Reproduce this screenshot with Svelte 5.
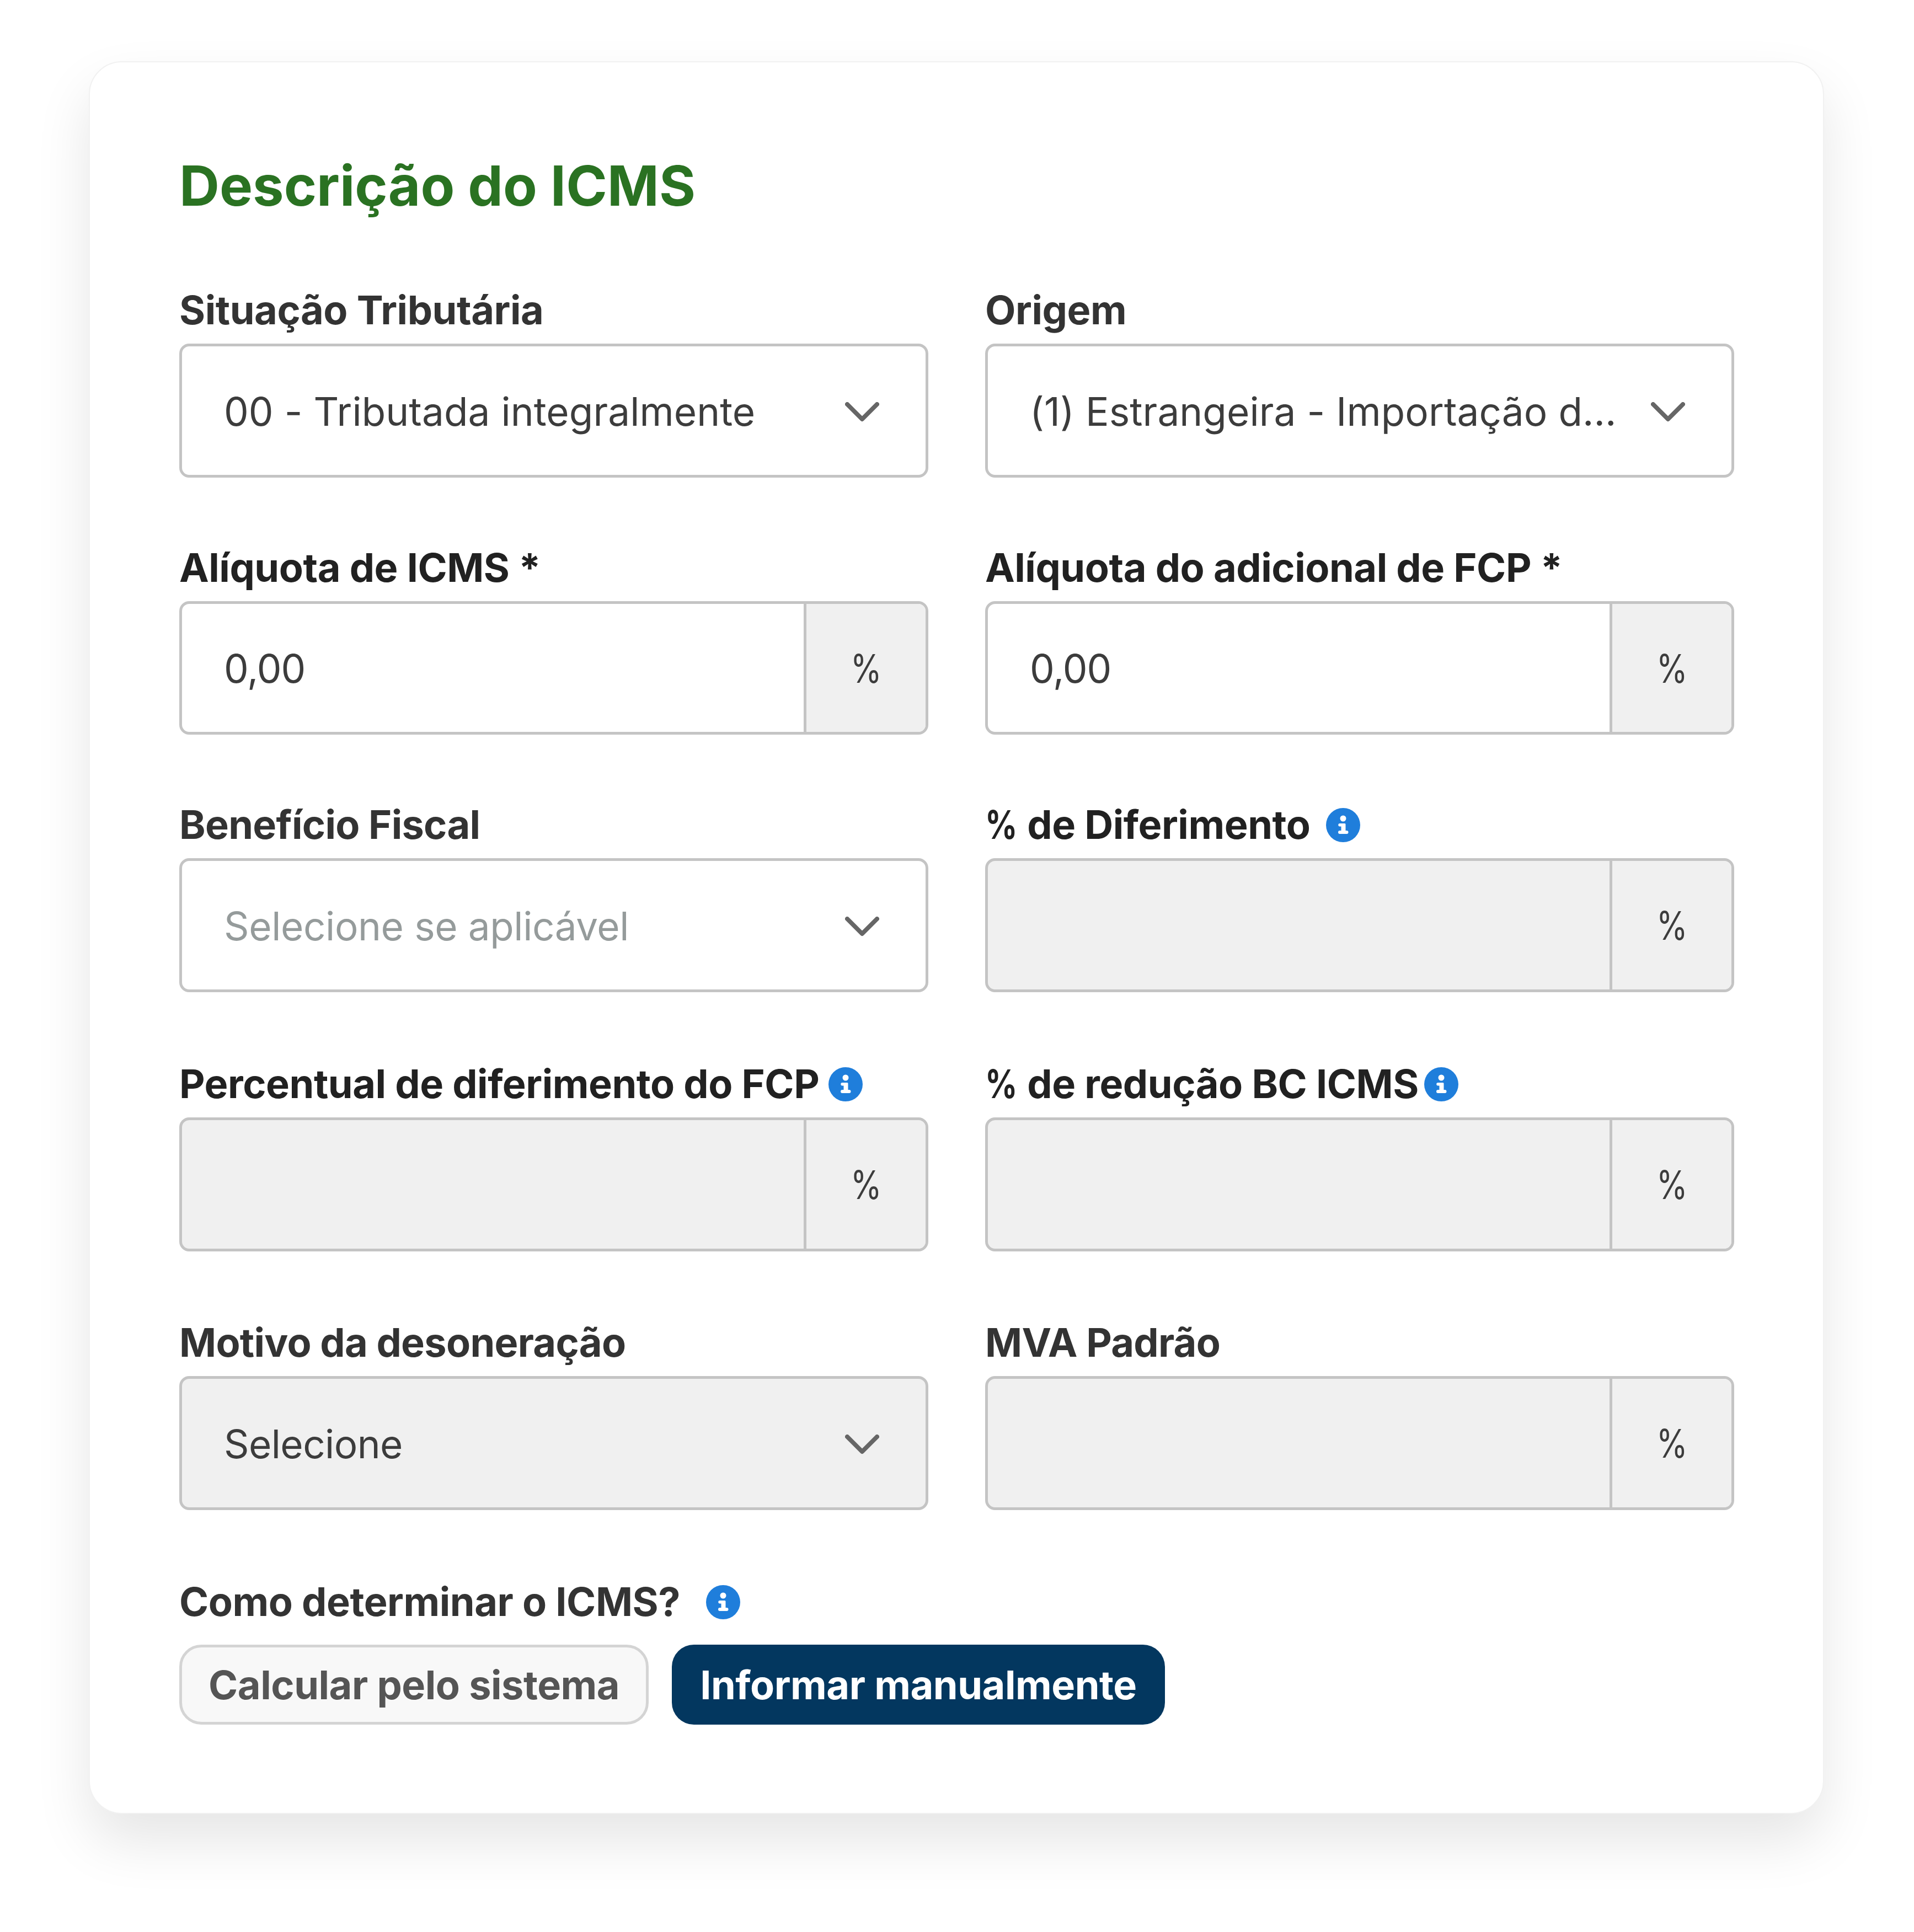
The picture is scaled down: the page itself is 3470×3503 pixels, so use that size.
<script>
  const fields = [
    { label: 'Situação Tributária', kind: 'select', value: '00 - Tributada integralmente' },
    { label: 'Origem', kind: 'select', value: '(1) Estrangeira - Importação d...' },
    { label: 'Alíquota de ICMS *', kind: 'pct', value: '0,00', strong: true },
    { label: 'Alíquota do adicional de FCP *', kind: 'pct', value: '0,00', strong: true },
    { label: 'Benefício Fiscal', kind: 'select', value: 'Selecione se aplicável', placeholder: true, snug: true },
    { label: ' de Diferimento', pre: '%', kind: 'pct', disabled: true, strong: true, info: 'wide' },
    { label: 'Percentual de diferimento do FCP', kind: 'pct', disabled: true, strong: true, info: 'loose' },
    { label: ' de redução BC ICMS', pre: '%', kind: 'pct', disabled: true, strong: true, info: 'tight' },
    { label: 'Motivo da desoneração', kind: 'select', value: 'Selecione', disabled: true, snug: true },
    { label: 'MVA Padrão', kind: 'pct', disabled: true, snug: true }
  ];
</script>

{#snippet info(cls)}
  <svg class="info {cls}" viewBox="0 0 62 62" aria-hidden="true">
    <circle cx="31" cy="31" r="31" fill="#1f7edb" />
    <circle cx="31" cy="19" r="5.5" fill="#fff" />
    <path d="M25 28h9a1.500 1.500 0 0 1 1.500 1.500V41h2a2.500 2.500 0 0 1 0 6H25a2.500 2.500 0 0 1 0-6h2.500V33.500H25a2.700 2.700 0 0 1 0-5.500z" fill="#fff" />
  </svg>
{/snippet}

<main class="card">
  <h1>Descrição do ICMS</h1>
  <div class="grid">
    {#each fields as f}
      <div class="field">
        <div class="label" class:strong={f.strong} class:snug={f.snug}>
          <span class="text">{#if f.pre}<span class="pc">{f.pre}</span>{/if}{f.label}</span>
          {#if f.info}{@render info(f.info)}{/if}
        </div>
        {#if f.kind === 'select'}
          <div class="control select" class:disabled={f.disabled}>
            <span class="value" class:placeholder={f.placeholder}>{f.value}</span>
            <svg class="chev" viewBox="0 0 62 36" aria-hidden="true">
              <path d="M4 4l27 27L58 4" fill="none" stroke="#666" stroke-width="8" stroke-linecap="round" stroke-linejoin="round" />
            </svg>
          </div>
        {:else}
          <div class="control pct" class:disabled={f.disabled}>
            <span class="value">{f.value ?? ''}</span>
            <span class="unit"><span class="pc">%</span></span>
          </div>
        {/if}
      </div>
    {/each}
  </div>
  <div class="how">
    <div class="label"><span class="text">Como determinar o ICMS?</span>{@render info('widest')}</div>
    <div class="buttons">
      <button class="btn ghost">Calcular pelo sistema</button>
      <button class="btn solid">Informar manualmente</button>
    </div>
  </div>
</main>

<style>
  :global(body) { margin: 0; background: #fff; }
  .card {
    box-sizing: border-box;
    width: 3146px;
    height: 3178px;
    margin: 111px 0 214px 161px;
    padding: 163px 160px 0 162px;
    background: #fff;
    border: 2px solid #f1f1f1;
    border-radius: 60px;
    box-shadow: 0 50px 100px rgba(0, 0, 0, 0.1);
    font-family: Inter, "Liberation Sans", sans-serif;
  }
  h1 {
    margin: 0 0 127px;
    font-size: 101px;
    line-height: 120px;
    font-weight: 700;
    color: #2a7222;
  }
  .grid {
    display: grid;
    grid-template-columns: 1358px 1358px;
    grid-template-rows: 343px 342px 343px 346px 345px;
    column-gap: 103px;
    row-gap: 124px;
  }
  .field { display: flex; flex-direction: column; justify-content: flex-end; }
  .label {
    display: flex;
    align-items: center;
    height: 76px;
    margin-bottom: 24px;
    font-size: 72px;
    font-weight: 700;
    letter-spacing: -0.45px;
    color: #333;
    white-space: nowrap;
  }
  .label.strong { color: #212121; }
  .label.snug { letter-spacing: -0.7px; }
  .label .pc {
    display: inline-block;
    transform: scaleX(0.8);
    transform-origin: left center;
    margin-right: -13px;
  }
  .info { width: 62px; height: 62px; flex: none; position: relative; top: 2px; }
  .info.wide { margin-left: 29px; }
  .info.widest { margin-left: 47px; }
  .info.loose { margin-left: 17px; }
  .info.tight { margin-left: 10px; }
  .control {
    box-sizing: border-box;
    display: flex;
    align-items: center;
    height: 243px;
    border: 5px solid #c4c4c4;
    border-radius: 18px;
    background: #fff;
    font-size: 71px;
    color: #3c3c3c;
    overflow: hidden;
  }
  .control.disabled { background: #f0f0f0; }
  .value { flex: 1; padding: 2px 0 0 76px; white-space: nowrap; letter-spacing: 0.08px; }
  .pct .value { letter-spacing: -1px; }
  .disabled .value { letter-spacing: -0.6px; }
  .placeholder { color: #959b9b; letter-spacing: -0.4px; }
  .chev { width: 62px; height: 36px; margin-right: 84px; flex: none; position: relative; top: 2px; }
  .unit {
    align-self: stretch;
    display: flex;
    align-items: center;
    justify-content: center;
    width: 221px;
    box-sizing: border-box;
    background: #f0f0f0;
    border-left: 5px solid #c4c4c4;
    font-size: 72px;
  }
  .unit .pc { display: inline-block; transform: scaleX(0.8); }
  .how { margin-top: 127px; }
  .how .label { margin-bottom: 41px; }
  .buttons { display: flex; gap: 42px; }
  .btn {
    box-sizing: border-box;
    height: 145px;
    padding: 0 47px;
    border-radius: 40px;
    font: 700 72px Inter, "Liberation Sans", sans-serif;
    letter-spacing: -0.45px;
  }
  .ghost { background: #f8f8f8; border: 5px solid #d4d4d4; color: #555; padding: 0 48px; }
  .solid { background: #03375f; border: 0; color: #fff; padding: 0 51px; }
</style>
